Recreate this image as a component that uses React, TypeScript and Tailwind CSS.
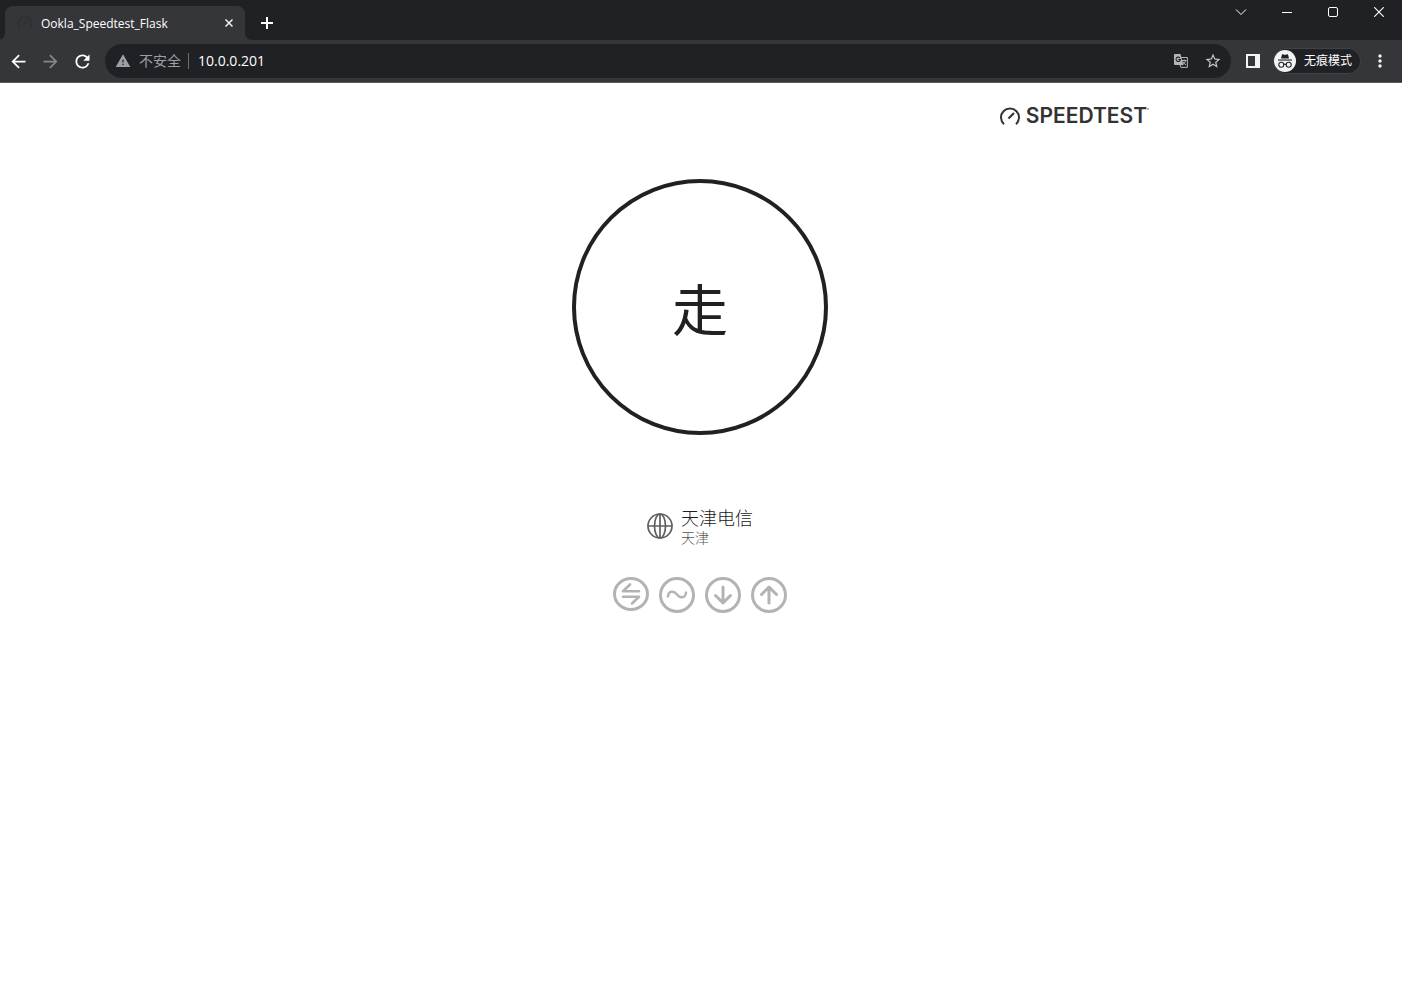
import type { ReactNode } from 'react';
import {
  MdArrowBack,
  MdArrowForward,
  MdMoreVert,
  MdRefresh,
  MdStarBorder,
  MdWarning,
} from 'react-icons/md';

function IconButton({ label, className, children }: { label: string; className: string; children: ReactNode }) {
  return (
    <button type="button" aria-label={label} className={`flex items-center justify-center ${className}`}>
      {children}
    </button>
  );
}

function TabStrip() {
  return (
    <div className="flex h-10 items-start justify-between bg-[#202124]">
      <div className="flex h-10 items-end">
        <svg width="5" height="8" viewBox="0 0 5 8" aria-hidden="true">
          <path d="M0 8V7.500C3 7 5 4.500 5 0V8Z" fill="#35363a" />
        </svg>
        <div className="flex h-[34px] w-60 items-center rounded-t-lg bg-[#35363a] pr-2 pl-3">
          <svg width="16" height="16" viewBox="0 0 22 20" fill="none" stroke="#303034" strokeWidth="2.400" aria-hidden="true">
            <path d="M4.600 17.400A9 9 0 1 1 17.400 17.400M10 11.500L14.500 7" />
          </svg>
          <span className="ml-2 flex-1 pt-0.5 text-xs text-white">Ookla_Speedtest_Flask</span>
          <IconButton label="Close tab" className="size-4">
            <svg width="8" height="8" viewBox="0 0 8 8" stroke="#f1f3f4" strokeWidth="1.500" aria-hidden="true">
              <path d="M0.500 0.500L7.500 7.500M7.500 0.500L0.500 7.500" />
            </svg>
          </IconButton>
        </div>
        <svg width="8" height="8" viewBox="0 0 8 8" aria-hidden="true">
          <path d="M0 0C0 5 3 8 8 8H0Z" fill="#35363a" />
        </svg>
        <IconButton label="New tab" className="h-[34px] w-7">
          <svg width="12" height="12" viewBox="0 0 12 12" stroke="#fff" strokeWidth="2" aria-hidden="true">
            <path d="M6 0V12M0 6H12" />
          </svg>
        </IconButton>
      </div>
      <div className="flex text-white">
        <IconButton label="Search tabs" className="h-6 w-[46px]">
          <svg width="12" height="12" viewBox="0 0 12 12" fill="none" stroke="#fff" aria-hidden="true">
            <path d="M1 3.500L6 8.500L11 3.500" />
          </svg>
        </IconButton>
        <IconButton label="Minimize" className="h-6 w-[46px]">
          <svg width="10" height="10" viewBox="0 0 10 10" aria-hidden="true">
            <path d="M0 5h10v1H0z" fill="#fff" />
          </svg>
        </IconButton>
        <IconButton label="Maximize" className="h-6 w-[46px]">
          <svg width="10" height="10" viewBox="0 0 10 10" fill="none" stroke="#fff" aria-hidden="true">
            <rect x="0.500" y="0.500" width="9" height="9" rx="1.500" />
          </svg>
        </IconButton>
        <IconButton label="Close window" className="h-6 w-[46px]">
          <svg width="10" height="10" viewBox="0 0 10 10" fill="none" stroke="#fff" strokeWidth="1.100" aria-hidden="true">
            <path d="M0.200 0.200L9.800 9.800M9.800 0.200L0.200 9.800" />
          </svg>
        </IconButton>
      </div>
    </div>
  );
}

function TranslateIcon() {
  return (
    <svg width="14" height="14" viewBox="0 0 14 14" fill="none" aria-hidden="true">
      <path d="M6 3.500H13.400V13.400H7L6 11" stroke="#b4b6ba" />
      <path d="M7.800 6.500H12.500M10.200 5.500V6.500M11.800 6.500Q11 9 8.500 10.800M8.800 7.500Q10 9.500 12 11" stroke="#b4b6ba" />
      <path d="M1 0H6.500L9.300 11H1Q0 11 0 10V1Q0 0 1 0Z" fill="#b4b6ba" />
      <path d="M5.900 3.900A2.200 2.200 0 1 0 6.400 5.600H4.300" stroke="#202124" strokeWidth="1.100" />
    </svg>
  );
}

function IncognitoIcon() {
  return (
    <svg width="22" height="22" viewBox="0 0 22 22" aria-hidden="true">
      <circle cx="11" cy="11" r="11" fill="#f1f3f4" />
      <path d="M7 8.500L8 4.600Q8.300 4 9 4.200L11 4.900L13 4.200Q13.700 4 14 4.600L15 8.500Z" fill="#202124" />
      <path d="M4 9.500H18V10.600H4Z" fill="#202124" />
      <g fill="none" stroke="#202124" strokeWidth="1.100">
        <circle cx="7.300" cy="14.700" r="2.500" />
        <circle cx="14.700" cy="14.700" r="2.500" />
        <path d="M9.800 14.500Q11 13.700 12.200 14.500" />
      </g>
    </svg>
  );
}

function Toolbar() {
  return (
    <div className="flex h-[43px] items-center border-b border-[#5b5c5f] bg-[#35363a] pr-2 pl-0.5">
      <div className="flex">
        <IconButton label="Back" className="h-8 w-8 text-white"><MdArrowBack size={21} /></IconButton>
        <IconButton label="Forward" className="h-8 w-8 text-[#86878a]"><MdArrowForward size={21} /></IconButton>
        <IconButton label="Reload" className="h-8 w-8 text-white"><MdRefresh size={21} /></IconButton>
      </div>
      <div className="ml-[7px] flex h-[34px] flex-1 items-center rounded-full bg-[#202124] pr-0.5 pl-2.5">
        <MdWarning size={16} className="text-[#9aa0a6]" />
        <label htmlFor="address" className="ml-2 text-sm whitespace-nowrap text-[#9aa0a6]">不安全</label>
        <span className="mr-[9px] ml-[7px] h-4 w-px bg-[#6b6e73]" />
        <input id="address" type="text" defaultValue="10.0.0.201" className="min-w-0 flex-1 bg-transparent text-sm text-white outline-none" />
        <IconButton label="Translate this page" className="w-8"><TranslateIcon /></IconButton>
        <IconButton label="Bookmark this page" className="w-8 text-[#c4c6ca]"><MdStarBorder size={18} /></IconButton>
      </div>
      <IconButton label="Side panel" className="ml-1.5 h-8 w-8">
        <svg width="14" height="14" viewBox="0 0 14 14" aria-hidden="true">
          <path d="M0 0H14V14H0ZM2 2V12H9V2Z" fill="#f1f3f4" fillRule="evenodd" />
        </svg>
      </IconButton>
      <button type="button" className="ml-1 flex h-[26px] items-center gap-2 rounded-full bg-[#202124] pr-[9px] pl-px text-xs whitespace-nowrap text-white ring-1 ring-[#414246] ring-inset">
        <IncognitoIcon />
        无痕模式
      </button>
      <IconButton label="Menu" className="ml-[5px] h-8 w-7 text-[#f1f3f4]"><MdMoreVert size={20} /></IconButton>
    </div>
  );
}

function SpeedtestLogo() {
  return (
    <a href="#" aria-label="Speedtest" className="flex items-center gap-1.5 text-[#333]">
      <svg width="20" height="18" viewBox="0 0 20 18" fill="none" stroke="currentColor" strokeWidth="2" aria-hidden="true">
        <path d="M4 17.200A9 9 0 1 1 16 17.200" />
        <path d="M8.500 11.500L14 6" strokeWidth="2.200" />
      </svg>
      <span className="flex font-[Inter] text-[21px] leading-6 font-semibold">
        SPEEDTEST
        <svg width="2" height="2" viewBox="0 0 2 2" className="mt-1" aria-hidden="true">
          <circle cx="1" cy="1" r="1" fill="#999" />
        </svg>
      </span>
    </a>
  );
}

function ModeIcons() {
  return (
    <div className="flex gap-2.5 text-[#b3b3b3]">
      <svg width="36" height="36" viewBox="0 0 36 36" fill="none" stroke="currentColor" strokeWidth="3" strokeLinecap="round" strokeLinejoin="round" aria-label="Connections" role="img">
        <ellipse cx="18" cy="17" rx="16.500" ry="15.500" />
        <path d="M26 14.200H10L17 7.500M10 19.800H26L19 26.500" strokeWidth="2.600" />
      </svg>
      <svg width="36" height="36" viewBox="0 0 36 36" fill="none" stroke="currentColor" strokeWidth="3" strokeLinecap="round" aria-label="Ping" role="img">
        <circle cx="18" cy="18" r="16.500" />
        <path d="M9 19.500C9.500 13.500 15 13.500 18 17.500C21 21.500 26.500 21.500 27 15.500" strokeWidth="2.400" />
      </svg>
      <svg width="36" height="36" viewBox="0 0 36 36" fill="none" stroke="currentColor" strokeWidth="3" strokeLinecap="round" strokeLinejoin="round" aria-label="Download" role="img">
        <circle cx="18" cy="18" r="16.500" />
        <path d="M18 10V25.500M10.500 18.500L18 26L25.500 18.500" />
      </svg>
      <svg width="36" height="36" viewBox="0 0 36 36" fill="none" stroke="currentColor" strokeWidth="3" strokeLinecap="round" strokeLinejoin="round" aria-label="Upload" role="img">
        <circle cx="18" cy="18" r="16.500" />
        <path d="M18 26V10.500M10.500 17.500L18 10L25.500 17.500" />
      </svg>
    </div>
  );
}

export default function App() {
  return (
    <div className="min-h-screen bg-white font-['Open_Sans','Noto_Sans_CJK_SC',sans-serif]">
      <header>
        <TabStrip />
        <Toolbar />
      </header>
      <main className="mx-auto flex max-w-[900px] flex-col items-center pt-[21px] pr-0.5">
        <div className="flex w-full justify-end">
          <SpeedtestLogo />
        </div>
        <button type="button" className="mt-[51px] flex size-64 items-center justify-center rounded-full border-4 border-[#212121] pt-1 text-[56px] leading-none text-[#212121]">
          走
        </button>
        <div className="mt-[71px] flex items-center gap-2">
          <svg width="26" height="26" viewBox="0 0 26 26" fill="none" stroke="#5f5f5f" strokeWidth="1.700" aria-hidden="true">
            <circle cx="13" cy="13" r="12" />
            <ellipse cx="13" cy="13" rx="5.500" ry="12" />
            <path d="M13 1V25M1 13H25" />
          </svg>
          <div>
            <p className="text-lg leading-6 font-light text-[#212121]">天津电信</p>
            <p className="text-sm leading-4 font-light text-[#555]">天津</p>
          </div>
        </div>
        <div className="mt-[31px]">
          <ModeIcons />
        </div>
      </main>
    </div>
  );
}
